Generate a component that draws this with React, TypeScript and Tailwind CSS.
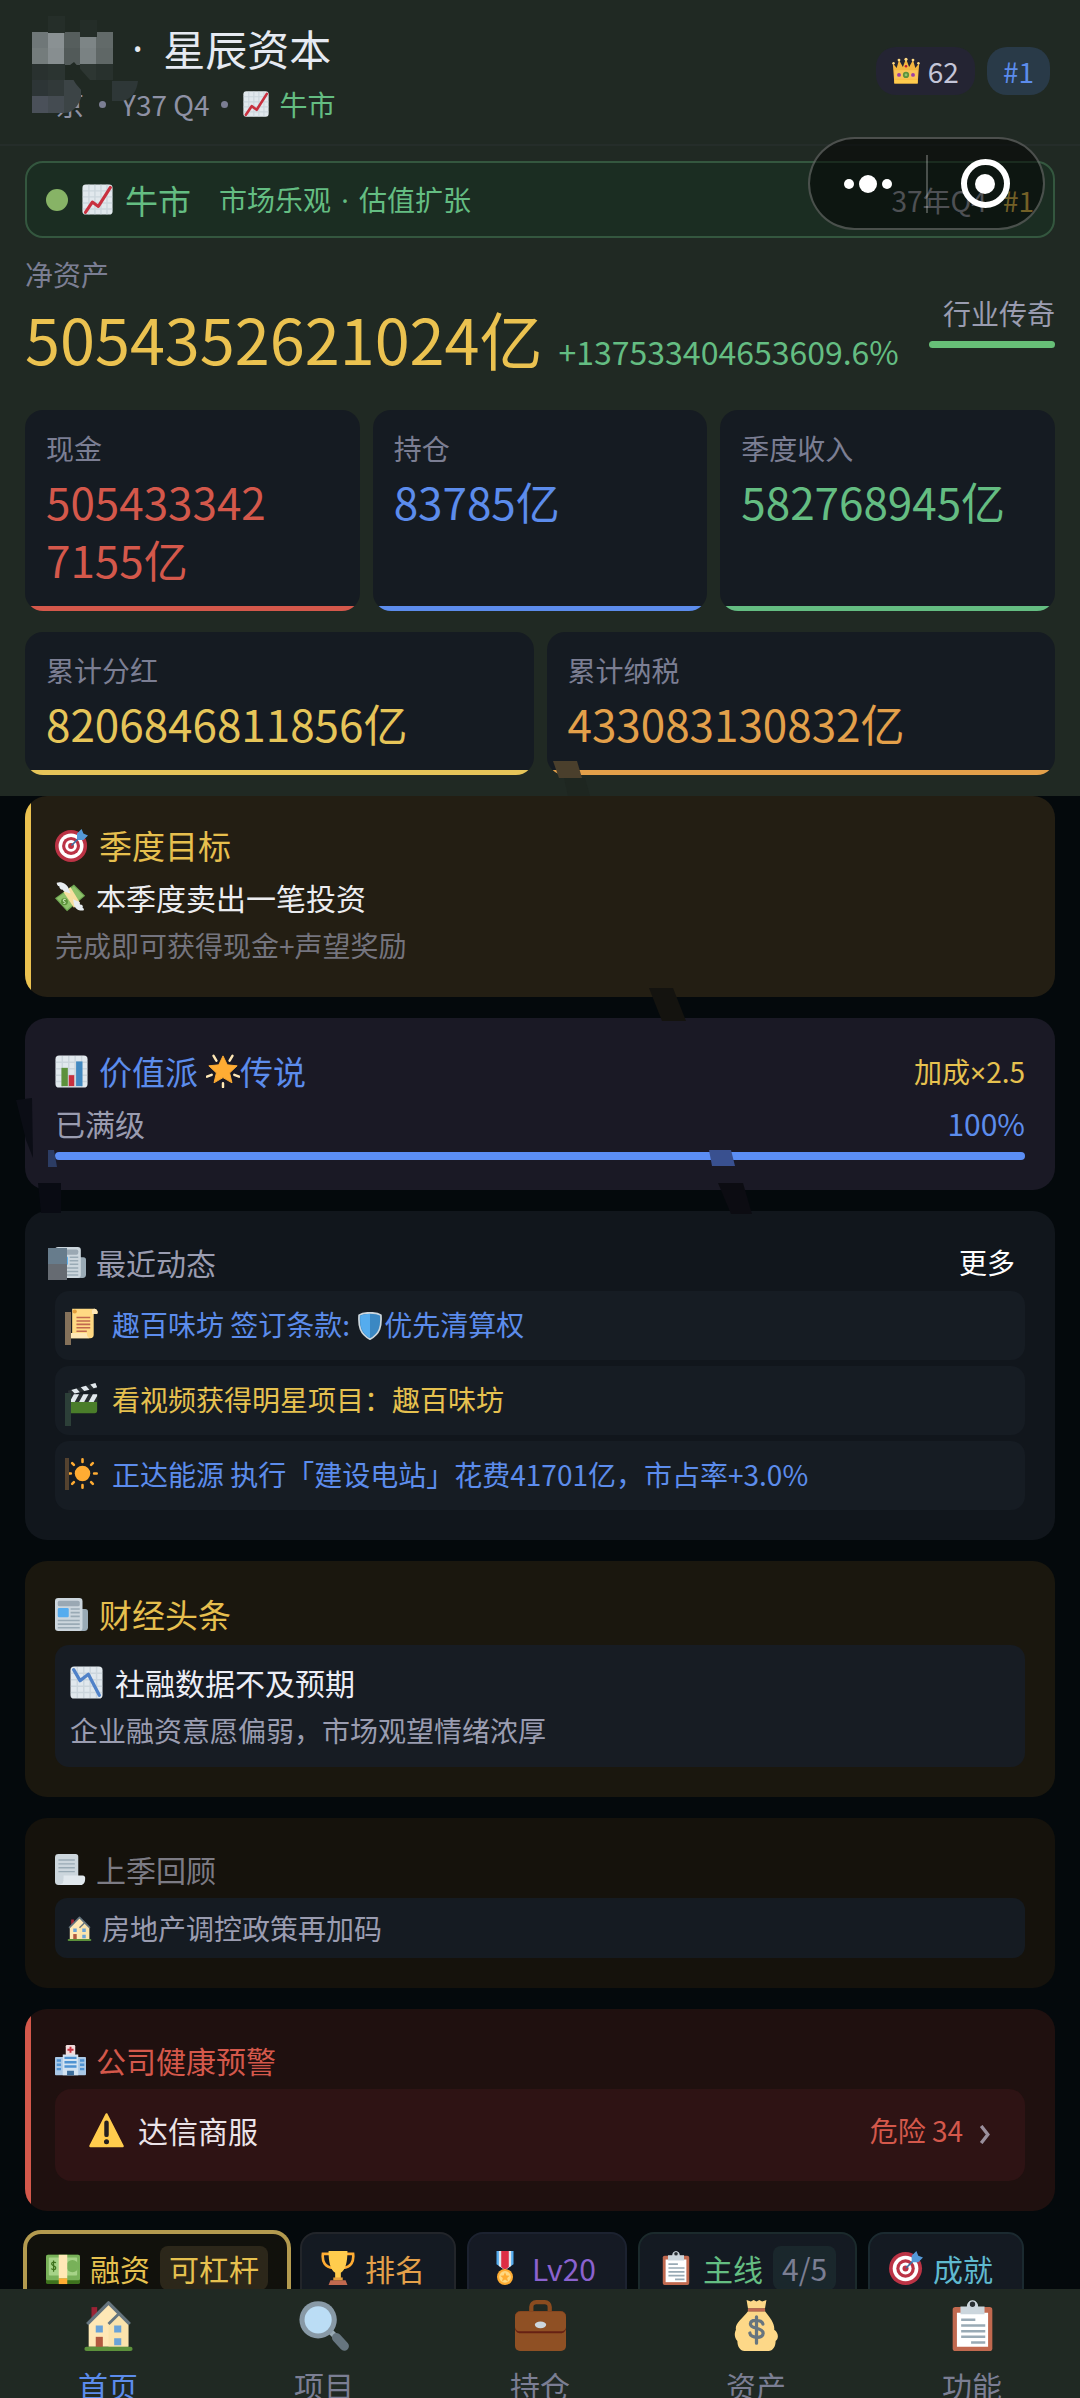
import React from 'react';

interface IconProps {
  className?: string;
}

const Svg: React.FC<IconProps & { children: React.ReactNode }> = ({ className = 'size-8', children }) => (
  <svg viewBox="0 0 36 36" className={`shrink-0 ${className}`} fill="none" aria-hidden="true">
    {children}
  </svg>
);

const ChartGrid = () => (
  <>
    <rect x="0.5" y="0.5" width="35" height="35" rx="4" fill="#e1e8ed" />
    <path d="M8 1v34M15 1v34M22 1v34M29 1v34M1 8h34M1 15h34M1 22h34M1 29h34" stroke="#ccd6dd" strokeWidth="1.6" />
  </>
);

const ChartUpIcon: React.FC<IconProps> = (p) => (
  <Svg {...p}>
    <ChartGrid />
    <path d="M4 33l8-12 7 5L33 4" stroke="#c8303f" strokeWidth="3.6" strokeLinecap="round" strokeLinejoin="round" />
  </Svg>
);

const ChartDownIcon: React.FC<IconProps> = (p) => (
  <Svg {...p}>
    <ChartGrid />
    <path d="M4 4l7 12 9-7 12 23" stroke="#5082c8" strokeWidth="3.6" strokeLinecap="round" strokeLinejoin="round" />
  </Svg>
);

const BarChartIcon: React.FC<IconProps> = (p) => (
  <Svg {...p}>
    <ChartGrid />
    <path d="M7 14h7v20H7z" fill="#5c913b" />
    <path d="M15 22h6v12h-6z" fill="#c8303f" />
    <path d="M23 7h7v27h-7z" fill="#4289c1" />
  </Svg>
);

const CrownIcon: React.FC<IconProps> = (p) => (
  <Svg {...p}>
    <path d="M3 34L1 8l5 6 3-10 5 9 4-11 4 11 5-9 3 10 5-6-2 26z" fill="#f4b63f" />
    <path d="M3 29h30v5H3z" fill="#ffcc4d" />
    <path d="M3 17h30v11H3z" fill="#f9c558" />
    <circle cx="18" cy="23" r="4" fill="#5c913b" />
    <circle cx="18" cy="23" r="1.8" fill="#8fc26b" />
    <circle cx="9" cy="23" r="2.5" fill="#9d3fa5" />
    <circle cx="27" cy="23" r="2.5" fill="#9d3fa5" />
    <circle cx="18" cy="12" r="1.6" fill="#be1931" />
    <circle cx="9" cy="4" r="1.8" fill="#ffd983" />
    <circle cx="18" cy="3" r="2" fill="#ffd983" />
    <circle cx="27" cy="4" r="1.8" fill="#ffd983" />
    <circle cx="2" cy="8" r="1.6" fill="#ffd983" />
    <circle cx="34" cy="8" r="1.6" fill="#ffd983" />
  </Svg>
);

const TargetIcon: React.FC<IconProps> = (p) => (
  <Svg {...p}>
    <circle cx="17.5" cy="18.5" r="17.5" fill="#bb3345" />
    <circle cx="17.5" cy="18.5" r="13.6" fill="#fff" />
    <circle cx="17.5" cy="18.5" r="9.8" fill="#bb3345" />
    <circle cx="17.5" cy="18.5" r="6.4" fill="#fff" />
    <circle cx="17.5" cy="18.5" r="3.2" fill="#bb3345" />
    <path d="M18 18L29 7" stroke="#3c6ea0" strokeWidth="1.8" />
    <path d="M24 11l0-6 5-5 2 5 5 2-5 5-6 0z" fill="#5499d8" />
  </Svg>
);

const MoneyWingsIcon: React.FC<IconProps> = (p) => (
  <Svg {...p}>
    <path d="M0 19L22 3l13 13-21 18z" fill="#6fa854" />
    <path d="M2 19L22 5l11 11-19 16z" fill="#8fc26b" />
    <path d="M10 12l8-6 11 18-7 6z" fill="#f7dfa0" />
    <circle cx="11" cy="23" r="4" fill="#5c913b" />
    <path d="M12.5 20.5c-2-1-4 .8-2 2s2 2.500-.8 2.500" stroke="#c6e5b3" strokeWidth="1.2" />
    <path d="M2 1c5-2 12 1 14 7l2 5c-3 0-4-1-4-1-2 0-4-1-5-3-3 0-4-2-4-4-2 0-3-2-3-4z" fill="#e7ecf0" />
    <path d="M33 33c-5 1-10-2-11-7l-1-6c3 1 4 2 4 2 3 0 4 2 4 4 3 0 4 2 3 4 2 1 2 2 1 3z" fill="#e7ecf0" />
  </Svg>
);

const StarIcon: React.FC<IconProps> = (p) => (
  <Svg {...p}>
    <path
      d="M8 2l3 5M28 2l-3 5M1 24l5-2M35 24l-5-2M18 31v4"
      stroke="#ffe8b6"
      strokeWidth="2.6"
      strokeLinecap="round"
    />
    <path d="M18 2l4.500 9.500 10.500 1-8 7.500 2.500 10.500L18 25l-9.500 5.500L11 20l-8-7.500 10.500-1z" fill="#ffac33" stroke="#ffac33" strokeLinejoin="round" />
  </Svg>
);

const NewspaperIcon: React.FC<IconProps> = (p) => (
  <Svg {...p}>
    <path d="M26 12h7a3 3 0 013 3v17a4 4 0 01-4 4h-6z" fill="#99aab5" />
    <rect x="0" y="0" width="30" height="36" rx="3.5" fill="#ccd6dd" />
    <rect x="3" y="3" width="24" height="6" rx="2" fill="#9aa8b3" />
    <rect x="3" y="11" width="12" height="10" rx="1.5" fill="#55acee" />
    <path d="M17 12h10M17 16h10M17 20h10M3 24.500h24M3 28.500h24M3 32.500h24" stroke="#99aab5" strokeWidth="1.8" />
  </Svg>
);

const ScrollIcon: React.FC<IconProps> = (p) => (
  <Svg {...p}>
    <path d="M6 1h26a4 4 0 013 6h-4v24a4 4 0 01-4 4H4a4 4 0 01-3-6h5z" fill="#ffd983" />
    <path d="M32 1a4 4 0 013 6h-6V4a3 3 0 013-3zM1 29h22c0 3 1 5 3 6H4a4 4 0 01-3-6z" fill="#ffe8b6" />
    <circle cx="9" cy="4" r="2.4" fill="#e39f3d" />
    <path d="M11 11h16M11 15h16M11 19h16M11 23h16M11 27h12" stroke="#c1694f" strokeWidth="1.8" />
  </Svg>
);

const ShieldIcon: React.FC<IconProps> = (p) => (
  <Svg {...p}>
    <path d="M18 1c5 0 11 1 14 3 1 14-1 24-14 31C5 28 3 18 4 4c3-2 9-3 14-3z" fill="#3b88c3" stroke="#ccd6dd" strokeWidth="2.2" />
    <path d="M18 2.500v31C7 27 5 18 5.500 5c3-2 8-2.500 12.500-2.500z" fill="#55acee" />
  </Svg>
);

const ClapperIcon: React.FC<IconProps> = (p) => (
  <Svg {...p}>
    <path d="M1 15h34v17a3 3 0 01-3 3H4a3 3 0 01-3-3z" fill="#4a7d2a" />
    <path d="M1 13h34v9H1z" fill="#292f33" />
    <path d="M3 22l5-9h6l-5 9zM14 22l5-9h6l-5 9zM25 22l5-9h5v2l-4 7z" fill="#e1e8ed" />
    <path d="M1 9L33 0l2 6L2 14z" fill="#292f33" />
    <path d="M5 8l6-1.700 4 4.500-6 1.500zM16 4.800l6-1.700 4 4.600-6 1.500zM27 1.700L33 0l2 5-4 1.200z" fill="#e1e8ed" />
  </Svg>
);

const SunIcon: React.FC<IconProps> = (p) => (
  <Svg {...p}>
    <circle cx="18" cy="18" r="9" fill="#ffac33" />
    <path
      d="M18 1.500v3M18 31.500v3M1.500 18h3M31.500 18h3M6 6l2 2M28 28l2 2M30 6l-2 2M8 28l-2 2"
      stroke="#ffac33"
      strokeWidth="3"
      strokeLinecap="round"
    />
  </Svg>
);

const PageIcon: React.FC<IconProps> = (p) => (
  <Svg {...p}>
    <path d="M0 4a4 4 0 014-4h20a3 3 0 013 3v24H12L8 36H4a4 4 0 01-4-4z" fill="#ccd6dd" />
    <path d="M10 25h22a3.500 3.500 0 013 4c0 4-2 7-5 7H5c4-1 5-4 5-11z" fill="#e1e8ed" />
    <path d="M4 7h19M4 11.500h19M4 16h19M4 20.500h19" stroke="#99aab5" strokeWidth="1.6" />
  </Svg>
);

const HouseIcon: React.FC<IconProps> = (p) => (
  <Svg {...p}>
    <path d="M6 5h4v8H6z" fill="#9b2335" />
    <path d="M4 16L18 2l14 14v17H4z" fill="#ffe8b6" />
    <path d="M18 17l7-7 7 7v16H18z" fill="#fbe3ac" />
    <path d="M3 17L18 2l15 15" stroke="#66757f" strokeWidth="2.4" strokeLinejoin="round" />
    <path d="M18 17l7-7" stroke="#66757f" strokeWidth="2" />
    <path d="M9 18h5v5H9zM22 18h5v5h-5zM22 27h5v5h-5z" fill="#6aa3d8" />
    <path d="M9 26h5v8H9z" fill="#b2593f" />
    <rect x="1" y="33" width="34" height="3" rx="1.5" fill="#5c913b" />
  </Svg>
);

const HospitalIcon: React.FC<IconProps> = (p) => (
  <Svg {...p}>
    <rect x="12.5" y="0" width="11" height="12" rx="1.5" fill="#f1dcdc" />
    <path d="M18 2v7M14.500 5.500h7" stroke="#c8303f" strokeWidth="2.2" />
    <rect x="0" y="14" width="36" height="21" rx="1" fill="#a9c8e6" />
    <path d="M9 11h18v24H9z" fill="#d3e3f1" />
    <path d="M2 18h5M2 23h5M2 28h5M29 18h5M29 23h5M29 28h5M11 15h14M11 20h14M11 25h14" stroke="#4f93d2" strokeWidth="2.8" />
    <path d="M14 30h8v5h-8z" fill="#3b6c99" />
  </Svg>
);

const WarningIcon: React.FC<IconProps> = (p) => (
  <Svg {...p}>
    <path d="M18 1.500L34.500 34h-33z" fill="#ffcc4d" stroke="#ffcc4d" strokeWidth="2.5" strokeLinejoin="round" />
    <path d="M18 10v12.500" stroke="#231f20" strokeWidth="4.6" strokeLinecap="round" />
    <circle cx="18" cy="29.5" r="2.6" fill="#231f20" />
  </Svg>
);

const BanknoteIcon: React.FC<IconProps> = (p) => (
  <Svg {...p}>
    <rect x="0" y="4" width="36" height="31" rx="2" fill="#3e721d" />
    <rect x="0" y="4" width="36" height="27" rx="2" fill="#78b159" />
    <rect x="3" y="7" width="30" height="19" rx="1" fill="#a6d388" />
    <circle cx="28" cy="16" r="6.5" fill="#78b159" />
    <path d="M10.500 12.500c-2-1.600-5-.5-4.500 1.500s4 1.500 4.300 3.700-3 2.600-4.800 1M8 10v12" stroke="#3e721d" strokeWidth="1.3" />
    <path d="M13.500 4h9v25h-9z" fill="#ffe8b6" />
    <path d="M13.500 29h9v6h-9z" fill="#ffac33" />
  </Svg>
);

const TrophyIcon: React.FC<IconProps> = (p) => (
  <Svg {...p}>
    <path d="M10 3H2c-1 8 2 14 11 15M26 3h8c1 8-2 14-11 15" stroke="#ffac33" strokeWidth="2.8" />
    <path d="M8 0h20c0 12-2 20-7 23v7h-6v-7C10 20 8 12 8 0z" fill="#ffcc4d" />
    <path d="M10 31h16l2 5H8z" fill="#c1694f" />
    <path d="M13 28h10v3H13z" fill="#e39f3d" />
  </Svg>
);

const MedalIcon: React.FC<IconProps> = (p) => (
  <Svg {...p}>
    <path d="M9 0h18v14l-9 6-9-6z" fill="#55acee" />
    <path d="M11.500 0h13v16l-6.500 4-6.500-4z" fill="#e1e8ed" />
    <path d="M14 0h8v17l-4 3-4-3z" fill="#dd2e44" />
    <circle cx="18" cy="27.5" r="8.5" fill="#ffac33" />
    <circle cx="18" cy="27.5" r="6.2" fill="#ffd983" />
    <path d="M18 22.500l1.500 3.500 3.500.3-2.700 2.400.9 3.500-3.200-2-3.200 2 .9-3.500-2.700-2.400 3.500-.3z" fill="#ffac33" />
  </Svg>
);

const ClipboardIcon: React.FC<IconProps> = (p) => (
  <Svg {...p}>
    <rect x="4" y="5" width="28" height="31" rx="2" fill="#c1694f" />
    <path d="M7 9h22v24H7z" fill="#fff" />
    <path d="M9.500 4.500H14a4 4 0 018 0h4.500V10h-17z" fill="#ccd6dd" />
    <circle cx="18" cy="3" r="2.4" fill="#292f33" stroke="#ccd6dd" />
    <path d="M10 14h10M10 18h17M10 22h17M10 26h17M17 30h10" stroke="#99aab5" strokeWidth="1.8" />
  </Svg>
);

const MagnifierIcon: React.FC<IconProps> = (p) => (
  <Svg {...p}>
    <path d="M22 22l4 4" stroke="#99aab5" strokeWidth="4" />
    <path d="M26.500 26.500l5.500 6" stroke="#66757f" strokeWidth="6.5" strokeLinecap="round" />
    <circle cx="13.5" cy="14" r="13.2" fill="#8899a6" />
    <circle cx="13.5" cy="14" r="9.6" fill="#bbddf5" />
  </Svg>
);

const BriefcaseIcon: React.FC<IconProps> = (p) => (
  <Svg {...p}>
    <path d="M11.500 9V5a3.500 3.500 0 013.500-3.500h6A3.500 3.500 0 0124.500 5v4" stroke="#8a4b1f" strokeWidth="3" />
    <rect x="0" y="8" width="36" height="28" rx="3.5" fill="#8f5024" />
    <path d="M0 12a4 4 0 014-4h28a4 4 0 014 4v8c0 2-2 3.500-3 3.500H3c-1 0-3-1.500-3-3.500z" fill="#662113" />
    <path d="M0 12a4 4 0 014-4h28a4 4 0 014 4v7c0 2-2 3-3 3H3c-1 0-3-1-3-3z" fill="#8f5024" />
    <ellipse cx="18" cy="17.5" rx="4" ry="2.4" fill="#ccd6dd" />
  </Svg>
);

const MoneyBagIcon: React.FC<IconProps> = (p) => (
  <Svg {...p}>
    <path d="M11 0l3 1 2-1 2 1 2-1 2 1 3-1-1 6H12z" fill="#fdd888" />
    <path d="M12 8h12c4 5 7 9 6.500 13 3 2 3.500 6 1 8 0 4-2 7-5 7h-17c-3 0-5-3-5-7-2.500-3-2-6-1-8-1-4 4.500-8 8.500-13z" fill="#fdd888" />
    <path d="M13 7h10" stroke="#bf6952" strokeWidth="2.4" strokeLinecap="round" />
    <path
      d="M22.500 17c-.5-3-8.500-4-8.800-.2-.2 4 9 2.300 9 6.700 0 4.200-9 3.500-9.400-.2M18 12v18.500"
      stroke="#67757f"
      strokeWidth="2.3"
      strokeLinecap="round"
    />
  </Svg>
);

const HEADER_CELLS = [
  { x: 32, y: 32, fill: '#6f7778' },
  { x: 48, y: 32, fill: '#8a9193' },
  { x: 64, y: 32, fill: '#565e5d' },
  { x: 80, y: 32, fill: '#7d8586' },
  { x: 96, y: 32, fill: '#626a69' },
  { x: 32, y: 48, fill: '#747c7c' },
  { x: 48, y: 48, fill: '#878e90' },
  { x: 64, y: 48, fill: '#525a59' },
  { x: 80, y: 48, fill: '#7a8283' },
  { x: 96, y: 48, fill: '#5f6766' },
  { x: 48, y: 16, fill: '#252e29' },
  { x: 80, y: 20, fill: '#242d28' },
  { x: 32, y: 64, fill: '#29312f' },
  { x: 48, y: 64, fill: '#2b3431' },
  { x: 80, y: 64, fill: '#2d3632' },
  { x: 96, y: 64, fill: '#28312d' },
  { x: 32, y: 80, fill: '#2d3536' },
  { x: 48, y: 80, fill: '#313939' },
  { x: 64, y: 80, fill: '#3c4446' },
  { x: 32, y: 96, fill: '#4a5059' },
  { x: 48, y: 96, fill: '#444b51' },
];

const SMUDGES = [
  { points: '553,761 577,761 582,778 559,778', fill: '#4a3f2c' },
  { points: '564,778 585,778 590,796 568,796', fill: '#1e2620' },
  { points: '649,988 673,988 686,1021 662,1021', fill: '#14130f' },
  { points: '709,1150 731,1150 735,1166 712,1166', fill: '#39508f' },
  { points: '718,1183 743,1183 752,1214 731,1214', fill: '#0c0c12' },
  { points: '16,1100 32,1098 33,1158 26,1140', fill: '#0b0d15' },
  { points: '48,1150 54,1150 57,1167 48,1167', fill: '#2c3c63' },
  { points: '38,1183 61,1183 61,1213 41,1213', fill: '#090b13' },
  { points: '48,1248 67,1248 67,1264 48,1264', fill: '#677c8c' },
  { points: '48,1264 67,1264 67,1280 48,1280', fill: '#666b72' },
  { points: '65,1312 71,1312 71,1345 65,1345', fill: '#84715a' },
  { points: '65,1393 71,1393 71,1426 65,1426', fill: '#2c3f38' },
  { points: '65,1458 69,1458 69,1490 65,1490', fill: '#54422f' },
];

const Smudges = () => (
  <svg className="absolute left-0 top-0 pointer-events-none" width="1080" height="2398" aria-hidden="true">
    {HEADER_CELLS.map((c) => (
      <rect key={`${c.x}-${c.y}`} x={c.x} y={c.y} width="17" height="17" fill={c.fill} />
    ))}
    <path d="M64 80h17v18c-3 8-8 15-17 15z" fill="#3c4446" />
    <path d="M66 68l8-6 16 18h23l2 18H88L76 84z" fill="#202923" />
    <path d="M112 81h26c-1 10-7 19-16 20h-10z" fill="#2e3737" />
    {SMUDGES.map((s) => (
      <polygon key={s.points} points={s.points} fill={s.fill} />
    ))}
  </svg>
);

const Capsule = () => (
  <div className="absolute right-[35px] top-[137px] h-[93px] w-[237px] rounded-full border-2 border-white/25 bg-black/50 flex items-center">
    <button type="button" aria-label="更多操作" className="flex-1 flex items-center justify-center gap-[5px]">
      <span className="size-[10px] rounded-full bg-white" />
      <span className="size-[18px] rounded-full bg-white" />
      <span className="size-[10px] rounded-full bg-white" />
    </button>
    <span className="h-[58px] w-[2px] bg-white/25" />
    <button type="button" aria-label="关闭" className="flex-1 flex items-center justify-center">
      <span className="size-[49px] rounded-full border-[6px] border-white flex items-center justify-center">
        <span className="size-5 rounded-full bg-white" />
      </span>
    </button>
  </div>
);

interface StatProps {
  label: string;
  value: string;
  color: string;
  bar: string;
}

const TOP_STATS: StatProps[] = [
  { label: '现金', value: '505433342\u200b7155亿', color: 'text-[#d4584b]', bar: 'bg-[#d4584b]' },
  { label: '持仓', value: '83785亿', color: 'text-[#5c8cec]', bar: 'bg-[#5c8cec]' },
  { label: '季度收入', value: '582768945亿', color: 'text-[#64bd82]', bar: 'bg-[#64bd82]' },
];

const BOTTOM_STATS: StatProps[] = [
  { label: '累计分红', value: '8206846811856亿', color: 'text-[#e6c559]', bar: 'bg-[#e6c559]' },
  { label: '累计纳税', value: '433083130832亿', color: 'text-[#e3a04a]', bar: 'bg-[#e3a04a]' },
];

const StatCard: React.FC<StatProps> = ({ label, value, color, bar }) => (
  <div className="flex flex-col overflow-hidden rounded-[18px] bg-[#151b22]">
    <div className="px-[21px] py-[18px]">
      <p className="text-[28px] leading-10 text-[#7b7e93]">{label}</p>
      <p className={`mt-1 text-[44px] leading-[58px] ${color}`}>{value}</p>
    </div>
    <div className={`mt-auto h-[5px] ${bar}`} />
  </div>
);

const NEWS = [
  {
    Icon: ScrollIcon,
    color: 'text-[#5c8cec]',
    text: (
      <>
        趣百味坊 签订条款: <ShieldIcon className="size-7 inline align-[-4px]" />
        优先清算权
      </>
    ),
  },
  { Icon: ClapperIcon, color: 'text-[#e6c14f]', text: '看视频获得明星项目：趣百味坊' },
  { Icon: SunIcon, color: 'text-[#5c8cec]', text: '正达能源 执行「建设电站」花费41701亿，市占率+3.0%' },
];

const ACTIONS = [
  { Icon: BanknoteIcon, label: '融资', badge: '可杠杆', color: 'text-[#e6c14f]', box: 'bg-[#11110c] border-[#b39a4f] ring-2 ring-[#b39a4f]', badgeColor: 'bg-[#2c271a]' },
  { Icon: TrophyIcon, label: '排名', color: 'text-[#e3a04a]', box: 'bg-[#141a22] border-[#22252a]' },
  { Icon: MedalIcon, label: 'Lv20', color: 'text-[#8b62cf]', box: 'bg-[#151a24] border-[#1c2230]' },
  { Icon: ClipboardIcon, label: '主线', badge: '4/5', color: 'text-[#64bd82]', box: 'bg-[#141a22] border-[#1b2a2c]', badgeColor: 'bg-[#1a272c] text-[#7b7e93]' },
  { Icon: TargetIcon, label: '成就', color: 'text-[#5fb9cf]', box: 'bg-[#141a22] border-[#1b2a30]' },
];

const TABS = [
  { Icon: HouseIcon, label: '首页', active: true },
  { Icon: MagnifierIcon, label: '项目' },
  { Icon: BriefcaseIcon, label: '持仓' },
  { Icon: MoneyBagIcon, label: '资产' },
  { Icon: ClipboardIcon, label: '功能' },
];

const Header = () => (
  <header className="bg-[#202923]">
    <div className="flex items-center justify-between border-b-2 border-[#252d2a] pt-[18px] pb-5 pl-7 pr-[30px]">
      <div>
        <h1 className="pl-[104px] text-[42px] leading-[60px] text-[#e6eaf2] flex gap-5">
          <span className="font-['Noto_Sans']">·</span>
          <span>星辰资本</span>
        </h1>
        <div className="mt-[6px] pl-7 flex items-center gap-[11px] text-[28px] leading-10 text-[#8e91a5]">
          <span>京</span>
          <span className="size-[7px] rounded-full bg-[#7b7e93] ml-1" />
          <span className="ml-1">Y37 Q4</span>
          <span className="size-[7px] rounded-full bg-[#7b7e93]" />
          <ChartUpIcon className="size-[26px] ml-1" />
          <span className="text-[#64bd82]">牛市</span>
        </div>
      </div>
      <div className="flex gap-3 text-[28px] leading-[48px]">
        <span className="flex items-center gap-2 rounded-[20px] bg-[#242433] px-4 text-[#c3c5d8]">
          <CrownIcon className="size-7" />
          62
        </span>
        <span className="rounded-[20px] bg-[#293a48] px-4 text-[#5c8cec]">#1</span>
      </div>
    </div>

    <div className="px-[25px] pt-[15px] pb-[21px]">
      <div className="flex items-center rounded-[18px] border-2 border-[#34573f] bg-[#1b2d22] px-[19px] py-4 text-[28px] leading-10">
        <span className="size-[22px] rounded-full bg-[#87b366]" />
        <ChartUpIcon className="size-[31px] ml-[14px]" />
        <span className="ml-3 text-[33px] text-[#64bd82]">牛市</span>
        <span className="ml-7 text-[#64bd82]">
          市场乐观 <span className="mx-1 font-['Noto_Sans']">·</span> 估值扩张
        </span>
        <span className="ml-auto text-[#9da1a9]">37年Q4</span>
        <span className="ml-4 text-[#e6c14f]">#1</span>
      </div>

      <div className="mt-4 flex items-center justify-between">
        <div>
          <p className="text-[28px] leading-10 text-[#7b7e93]">净资产</p>
          <p className="mt-1 flex items-baseline gap-4 text-[63px] leading-20 text-[#ebc250]">
            5054352621024亿
            <span className="text-[32px] leading-10 text-[#64bd82]">+137533404653609.6%</span>
          </p>
        </div>
        <div className="w-[126px] pt-2 text-right">
          <p className="text-[28px] leading-10 text-[#9a9cb0]">行业传奇</p>
          <div className="mt-2 h-[7px] rounded-full bg-[#67bf77]" />
        </div>
      </div>

      <div className="mt-8 grid grid-cols-3 gap-[13px]">
        {TOP_STATS.map((s) => (
          <StatCard key={s.label} {...s} />
        ))}
      </div>
      <div className="mt-[21px] grid grid-cols-2 gap-[13px]">
        {BOTTOM_STATS.map((s) => (
          <StatCard key={s.label} {...s} />
        ))}
      </div>
    </div>
  </header>
);

export default function App() {
  return (
    <div className="relative h-screen flex flex-col overflow-hidden bg-[#04090c] font-['Noto_Sans_CJK_SC',sans-serif]">
      <Header />

      <main className="flex-1 min-h-0 overflow-y-auto [scrollbar-width:none] px-[25px] flex flex-col gap-[21px]">
        <section className="shrink-0 flex overflow-hidden rounded-[22px] bg-[#231e13]">
          <div className="w-[6px] bg-[#ebc250]" />
          <div className="flex-1 pl-6 pr-[30px] pt-[26px] pb-[33px]">
            <h2 className="flex items-center gap-[11px] text-[33px] leading-[46px] text-[#e6bf4e]">
              <TargetIcon className="size-[33px]" />
              季度目标
            </h2>
            <p className="mt-2 flex items-center gap-[10px] text-[30px] leading-[42px] text-[#ecedf0]">
              <MoneyWingsIcon className="size-[31px]" />
              本季度卖出一笔投资
            </p>
            <p className="mt-2 text-[28px] leading-[38px] text-[#74747e]">完成即可获得现金+声望奖励</p>
          </div>
        </section>

        <section className="shrink-0 rounded-[22px] bg-[#1a1925] p-[30px]">
          <div className="flex items-center justify-between">
            <h2 className="flex items-center text-[33px] leading-[46px] text-[#5c8cec]">
              <BarChartIcon className="size-[33px] mr-[11px]" />
              价值派
              <StarIcon className="size-[34px] ml-2" />
              传说
            </h2>
            <span className="text-[28px] text-[#e6c14f]">
              加成<span className="font-['Noto_Sans']">×</span>2.5
            </span>
          </div>
          <div className="mt-2 flex items-center justify-between text-[30px] leading-[42px]">
            <span className="text-[#9a9cb0]">已满级</span>
            <span className="text-[#5c8cec]">100%</span>
          </div>
          <div className="mt-2 h-2 rounded-full bg-[#5b8ef5]" />
        </section>

        <section className="shrink-0 rounded-[22px] bg-[#11161c] p-[30px]">
          <div className="mb-2 flex items-center justify-between">
            <h2 className="flex items-center gap-[10px] text-[30px] leading-[42px] text-[#9a9cb0]">
              <NewspaperIcon className="size-[31px]" />
              最近动态
            </h2>
            <button type="button" className="mr-[10px] text-[28px] text-white">更多</button>
          </div>
          <ul className="flex flex-col gap-[6px] text-[28px]">
            {NEWS.map(({ Icon, color, text }, i) => (
              <li key={i} className={`flex items-center gap-[14px] h-[69px] rounded-[14px] bg-[#161c23] px-3 pb-1 ${color}`}>
                <Icon className="size-[31px]" />
                <span>{text}</span>
              </li>
            ))}
          </ul>
        </section>

        <section className="shrink-0 rounded-[22px] bg-[#1a170e] p-[30px]">
          <h2 className="mb-2 flex items-center gap-[11px] text-[33px] leading-[46px] text-[#e6bf4e]">
            <NewspaperIcon className="size-[33px]" />
            财经头条
          </h2>
          <div className="rounded-[14px] bg-[#171c23] px-[15px] pt-4 pb-[18px]">
            <p className="flex items-center gap-3 text-[30px] leading-[42px] text-[#ecedf5]">
              <ChartDownIcon className="size-[33px]" />
              社融数据不及预期
            </p>
            <p className="mt-2 text-[28px] leading-[38px] text-[#9a9cb0]">企业融资意愿偏弱，市场观望情绪浓厚</p>
          </div>
        </section>

        <section className="shrink-0 rounded-[22px] bg-[#15120c] p-[30px]">
          <h2 className="mb-2 flex items-center gap-[10px] text-[30px] leading-[42px] text-[#7c7b84]">
            <PageIcon className="size-[31px]" />
            上季回顾
          </h2>
          <p className="flex items-center gap-[10px] h-[60px] rounded-[12px] bg-[#151b22] px-3 text-[28px] text-[#9a9cb0]">
            <HouseIcon className="size-[25px]" />
            房地产调控政策再加码
          </p>
        </section>

        <section className="shrink-0 flex overflow-hidden rounded-[22px] bg-[#1f100f]">
          <div className="w-[6px] bg-[#d4584b]" />
          <div className="flex-1 py-[30px] pl-6 pr-[30px]">
            <h2 className="mb-2 flex items-center gap-[10px] text-[30px] leading-[42px] text-[#d4584b]">
              <HospitalIcon className="size-[31px]" />
              公司健康预警
            </h2>
            <button type="button" className="flex w-full items-center rounded-[16px] bg-[#2e1314] px-[34px] pt-5 pb-[30px] text-[30px] leading-[42px]">
              <WarningIcon className="size-[35px]" />
              <span className="ml-[14px] text-[#ece4e9]">达信商服</span>
              <span className="ml-auto text-[28px] text-[#d4584b]">危险 34</span>
              <svg viewBox="0 0 12 20" className="ml-4 mt-2 h-[19px] w-3" fill="none" aria-hidden="true">
                <path d="M2 1l7 9-7 9" stroke="#9a8f9c" strokeWidth="3.5" />
              </svg>
            </button>
          </div>
        </section>

        <div className="shrink-0 flex gap-[11px] pb-6 text-[30px] leading-[44px]">
          {ACTIONS.map(({ Icon, label, badge, color, box, badgeColor }) => (
            <button
              key={label}
              type="button"
              className={`flex items-center gap-[10px] rounded-[16px] border-2 px-[19px] py-3 ${color} ${box}`}
            >
              <Icon className="size-[34px]" />
              {label}
              <span className={badge ? `rounded-[8px] px-[9px] ${badgeColor}` : ''}>{badge}</span>
            </button>
          ))}
        </div>
      </main>

      <nav className="h-[109px] shrink-0 overflow-hidden bg-[#202923] flex">
        {TABS.map(({ Icon, label, active }) => (
          <a
            key={label}
            href="#"
            className={`flex-1 flex flex-col items-center gap-3 pt-[11px] text-[30px] leading-[44px] ${active ? 'text-[#5c8cec]' : 'text-[#7b7e93]'}`}
          >
            <Icon className="size-[51px]" />
            {label}
          </a>
        ))}
      </nav>

      <Smudges />
      <Capsule />
    </div>
  );
}
